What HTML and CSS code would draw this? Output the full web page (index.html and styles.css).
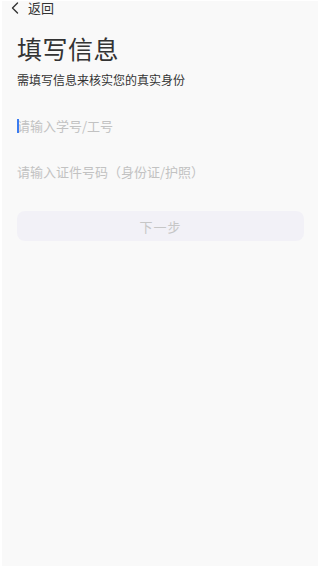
FILE: index.html
```html
<!DOCTYPE html>
<html lang="zh-CN">
<head>
  <meta charset="UTF-8">
  <meta name="viewport" content="width=device-width, initial-scale=1.0">
  <title>填写信息</title>
  <link rel="stylesheet" href="styles.css">
</head>
<body>
  <div class="page">
    <!-- Top bar -->
    <header class="topbar">
      <a class="back" href="#">
        <svg class="back-icon" width="8" height="12" viewBox="0 0 8 12">
          <path d="M6.5 1 L1.5 6 L6.5 11" fill="none" stroke="#333" stroke-width="1.4" stroke-linecap="round" stroke-linejoin="round"/>
        </svg>
        <span>返回</span>
      </a>
    </header>

    <main class="content">
      <h1 class="title">填写信息</h1>
      <p class="subtitle">需填写信息来核实您的真实身份</p>

      <form class="form">
        <div class="field">
          <span class="cursor"></span>
          <input class="input" type="text" placeholder="请输入学号/工号">
        </div>
        <div class="field">
          <input class="input" type="text" placeholder="请输入证件号码（身份证/护照）">
        </div>
        <button class="next-button" type="button" disabled>下一步</button>
      </form>
    </main>
  </div>
</body>
</html>
```

FILE: styles.css
```css
html, body {
  margin: 0;
  padding: 0;
  background-color: #fff;
}

body {
  font-family: "Noto Sans CJK SC", "Noto Sans", sans-serif;
  color: #333;
}

.page {
  margin: 1px 2px 2px 2px;
  height: 565px;
  background-color: #f9f9f9;
  box-sizing: border-box;
}

.topbar {
  height: 14px;
  display: flex;
  align-items: center;
  padding-left: 9px;
}

.back {
  display: flex;
  align-items: center;
  gap: 9px;
  color: #333;
  text-decoration: none;
  font-size: 13px;
  line-height: 14px;
}

.back-icon {
  display: block;
}

.content {
  padding: 0 14px 0 15px;
}

.title {
  margin: 18px 0 0 0;
  font-size: 25px;
  font-weight: normal;
  line-height: 30px;
  letter-spacing: 0.5px;
  color: #333;
}

.subtitle {
  margin: 9px 0 0 0;
  font-size: 12px;
  line-height: 16px;
  color: #333;
}

.form {
  margin-top: 15px;
}

.field {
  position: relative;
  height: 46px;
  display: flex;
  align-items: center;
}

.input {
  display: block;
  width: 100%;
  height: 20px;
  line-height: 20px;
  border: none;
  outline: none;
  background: transparent;
  padding: 0;
  margin: 0;
  font-family: "Noto Sans CJK SC", "Noto Sans", sans-serif;
  font-size: 13px;
  color: #333;
}

.input::placeholder {
  color: #c2c2c2;
}

.cursor {
  position: absolute;
  left: 0;
  top: 16px;
  width: 2px;
  height: 14px;
  background-color: #3b7cf0;
}

.next-button {
  display: block;
  width: 100%;
  height: 30px;
  margin-top: 16px;
  padding: 0;
  border: none;
  border-radius: 8px;
  background-color: #f2f1f7;
  color: #c6c6c6;
  font-family: "Noto Sans CJK SC", "Noto Sans", sans-serif;
  font-size: 13px;
  letter-spacing: 1px;
}
```
